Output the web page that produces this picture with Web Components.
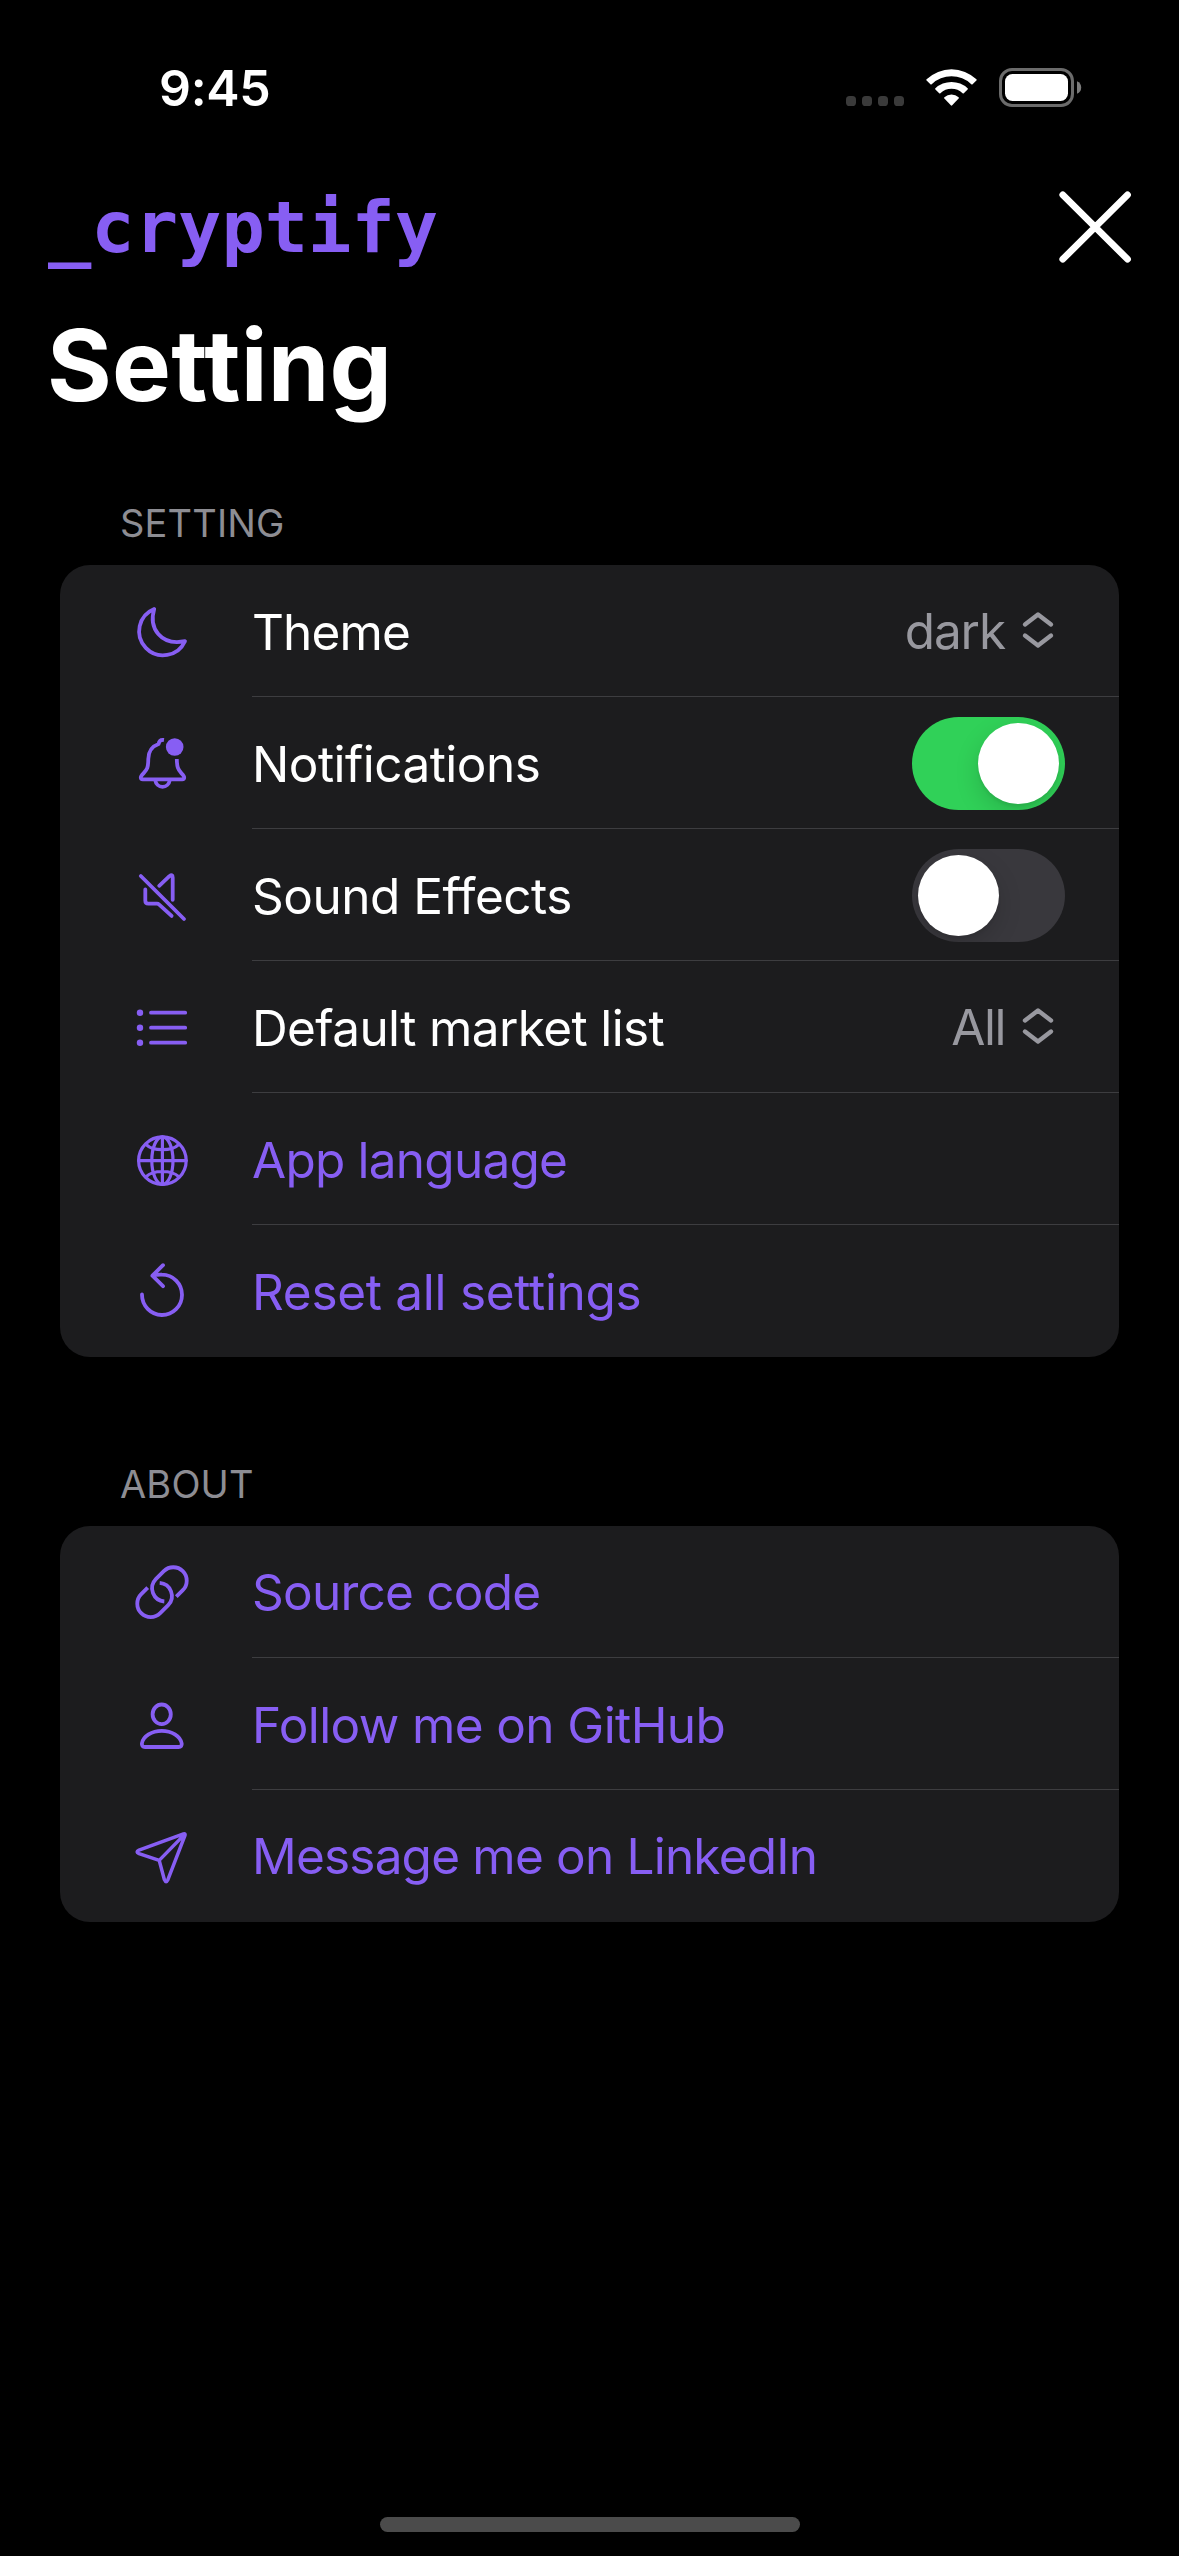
<!DOCTYPE html>
<html lang="en">
<head>
<meta charset="utf-8">
<title>cryptify</title>
<style>
html, body { margin: 0; background: #000; }
body { font-family: Inter, "Liberation Sans", sans-serif; color: #fff; }
</style>
</head>
<body>
<settings-screen></settings-screen>
<script>
const define = (name, html, attribute, apply) => {
  const template = document.createElement('template');
  template.innerHTML = html;
  customElements.define(name, class extends HTMLElement {
    static get observedAttributes() { return attribute ? [attribute] : []; }
    constructor() {
      super();
      this.attachShadow({ mode: 'open' }).append(template.content.cloneNode(true));
    }
    attributeChangedCallback(_, __, value) { apply(this.shadowRoot, value); }
  });
};

const icons = {
  moon: '<path d="M24.2 10 A24 24 0 1 0 55 42.2 C30.5 47 18.5 29 24.2 10Z"/>',
  bell: '<path d="M34 9 C31 8.6 29 10.2 28.6 13 C21.5 15.5 18.4 21 18.3 28 C18.2 36.5 17.3 38.4 13.5 42.4 C11.5 44.5 10.8 45.6 10.8 46.6 C10.8 47.7 11.6 48.3 12.8 48.3 H52.2 C53.4 48.3 54.2 47.7 54.2 46.6 C54.2 45.6 53.5 44.5 51.5 42.4 C47.8 38.4 47 36 46.8 28" stroke-linecap="butt"/><path d="M25.2 49 A7.4 8.2 0 0 0 39.8 49" stroke-linecap="butt"/><circle cx="44.7" cy="16" r="8.8" fill="currentColor" stroke="none"/>',
  mute: '<path d="M10.8 13 L54 56"/><path d="M15.3 26.5 V37.5 Q15.3 40.7 18.3 40.7 H27 Q28.2 40.7 29.2 41.6 L41.6 52.9"/><path d="M29.2 22.8 L39.4 13.2 Q42.7 10.7 42.7 14.4 V36.8"/>',
  list: '<path d="M21 17.7H55.2M21 32.7H55.2M21 47.7H55.2"/><g fill="currentColor" stroke="none"><circle cx="10" cy="17.7" r="3.2"/><circle cx="10" cy="32.7" r="3.2"/><circle cx="10" cy="47.7" r="3.2"/></g>',
  globe: '<g stroke-width="3.2"><circle cx="32.4" cy="33.6" r="23.8"/><ellipse cx="32.4" cy="33.6" rx="10.6" ry="23.8"/><path d="M32.4 10V57M8.6 33.6H56.2M16.2 17.6C23 24.4 41.8 24.4 48.6 17.6M16.2 49.6C23 42.8 41.8 42.8 48.6 49.6"/></g>',
  reset: '<path d="M12 35.5 A20 20.2 0 1 0 32 15.6 Q27 15.4 22.6 16.7 M33 6.2 L22.4 16.7 L33 27.2"/>',
  link: '<g stroke-linecap="butt"><path d="M46.3 36.7 L52.8 30.2 A13.4 13.4 0 0 0 33.8 11.2 L25.8 19.2 A13.2 13.2 0 0 0 34.3 41.5"/><path transform="rotate(180 32 32.2)" d="M46.3 36.7 L52.8 30.2 A13.4 13.4 0 0 0 33.8 11.2 L25.8 19.2 A13.2 13.2 0 0 0 34.3 41.5"/></g>',
  person: '<ellipse cx="31.7" cy="22.3" rx="9.1" ry="9.8"/><path d="M15 55 H48.6 C51 55 52 53.5 51.7 51.5 C50.5 44 41.5 38.8 31.8 38.8 C22 38.8 13 44 11.9 51.5 C11.6 53.5 12.7 55 15 55Z"/>',
  plane: '<g stroke-width="3.5"><path d="M53.5 9.9 L9 26.2 Q5.2 28 9 29.6 L29.2 36.4 L34.4 55.7 Q36 59.6 37.9 55.7 L55 11.4 Q55.6 9.3 53.5 9.9Z M29.2 36.4 L54.6 10.4"/></g>'
};

define('line-icon', `<style>
:host{display:block;width:64px;height:64px;flex:none;color:#875ef3}
svg{display:block;width:100%;height:100%;fill:none;stroke:currentColor;stroke-width:3.8;stroke-linecap:round;stroke-linejoin:round}
</style><svg viewBox="0 0 64 64"></svg>`,
  'name', (root, value) => { root.querySelector('svg').innerHTML = icons[value]; });

define('toggle-switch', `<style>
:host{display:flex;box-sizing:border-box;width:153px;height:93px;padding:6px;border-radius:47px;background:#39383d;margin:2px 54px 0 0;overflow:hidden}
:host([on]){background:#30d158;justify-content:flex-end}
i{width:81px;height:81px;border-radius:50%;background:#fff;box-shadow:0 9px 24px rgba(0,0,0,.15),0 3px 3px rgba(0,0,0,.06)}
</style><i></i>`);

define('value-picker', `<style>
:host{display:flex;align-items:center;color:#98989f;font-size:49.5px;margin-right:64px;letter-spacing:var(--ls,0)}
svg{display:block;margin:-2px 0 0 16px;fill:none;stroke:currentColor;stroke-width:4.4;stroke-linecap:round;stroke-linejoin:round}
</style><slot></slot><svg width="34" height="40" viewBox="0 0 34 40"><path d="M4 14.5 17 4.5 30 14.5M4 25.5 17 35.5 30 25.5"/></svg>`);

define('setting-row', `<style>
:host{display:flex;box-sizing:border-box;height:132px;padding-left:70px}
.main{flex:1;display:flex;align-items:center;justify-content:space-between;margin-left:58px;border-bottom:1px solid #3d3d40}
:host(:last-of-type) .main{border-bottom-color:transparent}
line-icon{margin-top:34px}
.label{font-size:49.5px;line-height:60px;padding-top:var(--drop,3px);white-space:nowrap;letter-spacing:var(--ls,0)}
:host([link]) .label{color:#875ef3}
</style><line-icon></line-icon><div class="main"><span class="label"><slot></slot></span><slot name="control"></slot></div>`,
  'icon', (root, value) => root.querySelector('line-icon').setAttribute('name', value));

define('setting-group', `<style>
:host{display:block;margin:0 60px}
h2{margin:0;padding-left:60px;font-weight:400;font-size:38px;line-height:46px;color:#8d8d93;height:65px;letter-spacing:.15px}
.card{background:#1c1c1e;border-radius:30px;overflow:hidden}
</style><h2></h2><div class="card"><slot></slot></div>`,
  'heading', (root, value) => { root.querySelector('h2').textContent = value; });

define('status-bar', `<style>
:host{display:flex;height:150px;justify-content:space-between}
.time{font-weight:600;font-size:50px;line-height:60px;letter-spacing:-.3px;margin:58px 0 0 159px}
svg{display:block;margin:60px 95px 0 0}
</style><span class="time">9:45</span>
<svg width="240" height="56" viewBox="0 0 240 56">
<g fill="#3a3a3a"><rect x="2" y="36" width="10" height="10" rx="3.6"/><rect x="18" y="36" width="10" height="10" rx="3.6"/><rect x="34" y="36" width="10" height="10" rx="3.6"/><rect x="50" y="36" width="10" height="10" rx="3.6"/></g>
<g fill="#fff"><path d="M82.6 19.3 A36 36 0 0 1 132.4 19.3 Q133 19.9 132.4 20.5 L128.6 24.2 Q128 24.8 127.3 24.2 A28.8 28.8 0 0 0 87.7 24.2 Q87 24.8 86.4 24.2 L82.6 20.5 Q82 19.9 82.6 19.3Z"/><path d="M91.4 28.3 A23.4 23.4 0 0 1 123.6 28.3 Q124.3 28.9 123.6 29.5 L119.8 33.2 Q119.2 33.8 118.6 33.2 A16.2 16.2 0 0 0 96.4 33.2 Q95.8 33.8 95.2 33.2 L91.4 29.5 Q90.7 28.9 91.4 28.3Z"/><path d="M100.4 37.2 A10.6 10.6 0 0 1 114.6 37.2 Q115.2 37.8 114.6 38.5 L108.2 45.3 Q107.5 46 106.8 45.3 L100.4 38.5 Q99.8 37.8 100.4 37.2Z"/></g>
<rect x="156.5" y="9.5" width="72" height="36" rx="11.5" fill="none" stroke="#6b6b6b" stroke-width="3"/><rect x="161" y="14" width="63" height="27" rx="7.5" fill="#fff"/><path d="M233 21.2 Q237.2 23 237.2 27.5 Q237.2 32 233 33.8Z" fill="#7b7b7b"/>
</svg>`);

define('app-header', `<style>
:host{display:block;height:350px}
.bar{display:flex;justify-content:space-between;height:155px}
.brand{font:700 72px/84px "DejaVu Sans Mono",monospace;color:#875ef3;margin:35px 0 0 48px}
svg{display:block;margin:36px 43px 0 0}
h1{margin:0 0 0 47px;font-weight:700;font-size:99px;line-height:120px;letter-spacing:.2px}
</style><div class="bar"><span class="brand">_cryptify</span><svg width="82" height="82" viewBox="0 0 82 82"><path d="M8.8 8.8 73.5 73.2M73.5 8.8 8.8 73.2" stroke="#fff" stroke-width="6.8" stroke-linecap="round"/></svg></div><h1>Setting</h1>`);

define('settings-screen', `<style>
:host{display:flex;flex-direction:column;width:1179px;height:2556px;background:#000;overflow:hidden}
setting-group + setting-group{margin-top:104px}
.home{width:420px;height:15px;border-radius:8px;background:#4b4b4b;margin:auto auto 24px 380px}
</style>
<status-bar></status-bar>
<app-header></app-header>
<setting-group heading="SETTING">
<setting-row icon="moon" style="--ls:-.87px">Theme<value-picker slot="control" style="--ls:-1.1px">dark</value-picker></setting-row>
<setting-row icon="bell" style="--ls:-.54px">Notifications<toggle-switch slot="control" on></toggle-switch></setting-row>
<setting-row icon="mute" style="--ls:-.48px">Sound Effects<toggle-switch slot="control"></toggle-switch></setting-row>
<setting-row icon="list" style="--ls:-.62px">Default market list<value-picker slot="control" style="--ls:-1.5px">All</value-picker></setting-row>
<setting-row icon="globe" link style="--ls:-.77px">App language</setting-row>
<setting-row icon="reset" link style="--ls:-.29px">Reset all settings</setting-row>
</setting-group>
<setting-group heading="ABOUT">
<setting-row icon="link" link style="--ls:-.76px;--drop:1px">Source code</setting-row>
<setting-row icon="person" link style="--ls:-.6px">Follow me on GitHub</setting-row>
<setting-row icon="plane" link style="--ls:-.8px;--drop:1px">Message me on LinkedIn</setting-row>
</setting-group>
<div class="home"></div>`);
</script>
</body>
</html>
